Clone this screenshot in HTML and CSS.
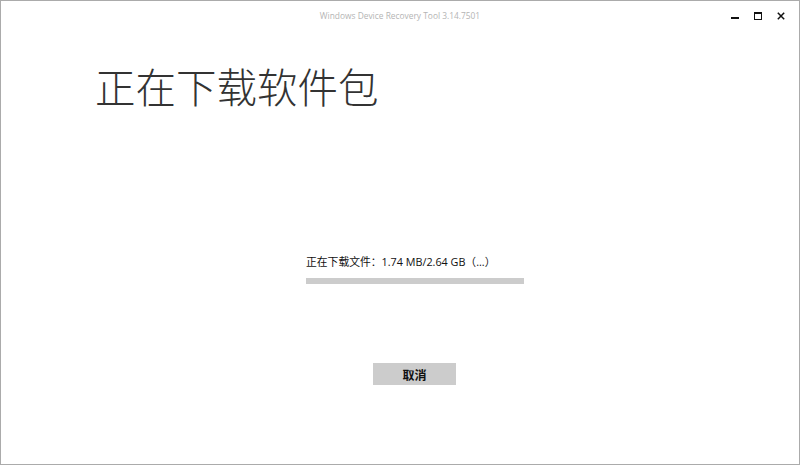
FILE: index.html
```html
<!DOCTYPE html>
<html lang="zh-CN">
<head>
<meta charset="utf-8">
<title>Windows Device Recovery Tool</title>
<link rel="stylesheet" href="styles.css">
</head>
<body>
<div class="window">
  <div class="titlebar">
    <div class="title">Windows Device Recovery Tool 3.14.7501</div>
    <div class="controls">
      <svg class="ctl" width="20" height="20" viewBox="0 0 20 20"><rect x="6" y="11" width="8" height="2" fill="#111"/></svg>
      <svg class="ctl" width="20" height="20" viewBox="0 0 20 20"><rect x="6.5" y="6.5" width="7" height="7" fill="none" stroke="#111"/><rect x="6" y="6" width="8" height="2" fill="#111"/></svg>
      <svg class="ctl" width="20" height="20" viewBox="0 0 20 20"><path d="M6.8 6.8 L13.2 13.2 M13.2 6.8 L6.8 13.2" stroke="#111" stroke-width="1.5"/></svg>
    </div>
  </div>
  <h1 class="heading">正在下载软件包</h1>
  <div class="progress-area">
    <div class="status">正在下载文件：1.74 MB/2.64 GB（...）</div>
    <div class="bar"><div class="fill" style="width:0%"></div></div>
  </div>
  <div class="actions">
    <button class="cancel">取消</button>
  </div>
</div>
</body>
</html>
```
FILE: styles.css
```css
html, body {
  margin: 0;
  padding: 0;
  background: #fff;
}
.window {
  box-sizing: border-box;
  width: 800px;
  height: 465px;
  border: 1px solid #ababab;
  background: #fff;
  display: flex;
  flex-direction: column;
  font-family: "Noto Sans CJK SC", "Open Sans", sans-serif;
}
.titlebar {
  height: 30px;
  position: relative;
  display: flex;
  justify-content: center;
}
.title {
  font-family: "Open Sans", "Noto Sans", sans-serif;
  font-size: 8.4px;
  color: #b4b4b4;
  margin-top: 9px;
}
.controls {
  position: absolute;
  right: 8px;
  top: 5px;
  display: flex;
  gap: 3px;
}
.ctl {
  display: block;
}
.heading {
  margin: 27px 0 0 94px;
  font-family: "Noto Sans CJK SC", sans-serif;
  font-weight: 300;
  font-size: 40.5px;
  line-height: 56px;
  color: #333;
  letter-spacing: 0;
}
.progress-area {
  margin: 140px 0 0 305px;
  width: 218px;
}
.status {
  font-family: "Open Sans", "Noto Sans CJK SC", sans-serif;
  font-size: 10.8px;
  line-height: 16px;
  color: #111;
  white-space: nowrap;
}
.bar {
  margin-top: 8px;
  height: 6px;
  background: #cccccc;
}
.fill {
  height: 100%;
  background: #2b7ad0;
}
.actions {
  display: flex;
  justify-content: center;
  margin-top: 79px;
  padding-left: 29px;
}
.cancel {
  width: 83px;
  height: 22px;
  border: none;
  background: #cccccc;
  font-family: "Noto Sans CJK SC", sans-serif;
  font-weight: 700;
  font-size: 12px;
  color: #111;
  padding: 0;
}
```
